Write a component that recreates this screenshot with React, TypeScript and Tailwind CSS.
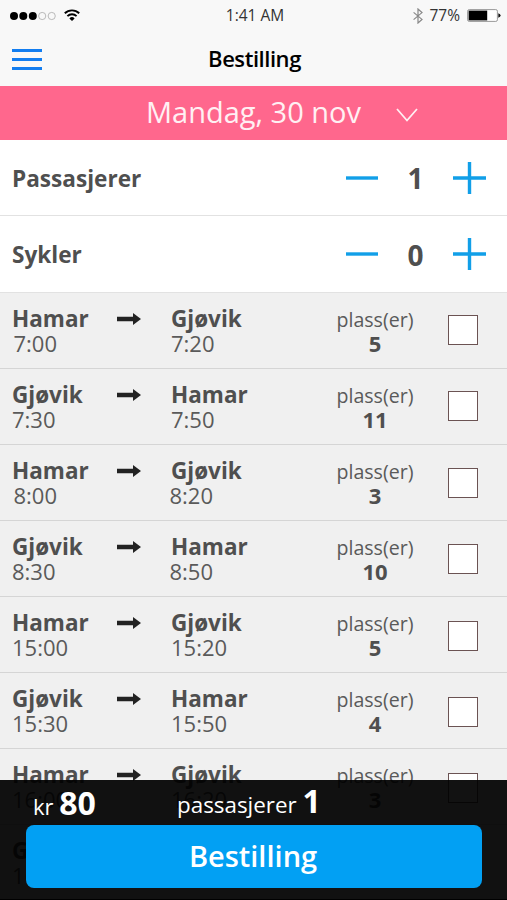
import React, { useState } from 'react';

interface Avgang {
  fra: string;
  til: string;
  avgang: string;
  ankomst: string;
  plasser: number;
}

const AVGANGER: Avgang[] = [
  { fra: 'Hamar', til: 'Gjøvik', avgang: '7:00', ankomst: '7:20', plasser: 5 },
  { fra: 'Gjøvik', til: 'Hamar', avgang: '7:30', ankomst: '7:50', plasser: 11 },
  { fra: 'Hamar', til: 'Gjøvik', avgang: '8:00', ankomst: '8:20', plasser: 3 },
  { fra: 'Gjøvik', til: 'Hamar', avgang: '8:30', ankomst: '8:50', plasser: 10 },
  { fra: 'Hamar', til: 'Gjøvik', avgang: '15:00', ankomst: '15:20', plasser: 5 },
  { fra: 'Gjøvik', til: 'Hamar', avgang: '15:30', ankomst: '15:50', plasser: 4 },
  { fra: 'Hamar', til: 'Gjøvik', avgang: '16:00', ankomst: '16:20', plasser: 3 },
  { fra: 'Gjøvik', til: 'Hamar', avgang: '16:30', ankomst: '16:50', plasser: 6 },
];

function StatusBar() {
  return (
    <div className="grid h-[31px] grid-cols-3 items-center pl-[10px] pr-[6px] text-[15.5px] text-[#333]">
      <div className="flex items-center">
        <svg width="47" height="10" viewBox="0 0 47 10">
          <circle cx="4" cy="5" r="4" fill="#000" />
          <circle cx="13.3" cy="5" r="4" fill="#000" />
          <circle cx="22.8" cy="5" r="4" fill="#000" />
          <circle cx="32.2" cy="5" r="3.6" fill="none" stroke="#aaa" strokeWidth="0.8" />
          <circle cx="41.7" cy="5" r="3.6" fill="none" stroke="#aaa" strokeWidth="0.8" />
        </svg>
        <svg className="mb-0.5 ml-[7px]" width="16" height="12" viewBox="0 0 16 12" fill="none" stroke="#000" strokeWidth="1.9">
          <path d="M0.8 4.3A10.3 10.3 0 0 1 15.2 4.3" />
          <path d="M3.4 7.1A6.6 6.6 0 0 1 12.6 7.1" />
          <path d="M8 12L5.4 9.4A3.7 3.7 0 0 1 10.6 9.4Z" fill="#000" stroke="none" />
        </svg>
      </div>
      <span className="pr-px pt-px text-center">1:41 AM</span>
      <div className="flex items-center justify-end">
        <svg width="10" height="16" viewBox="0 0 10 16" fill="none" stroke="#888" strokeWidth="1.2">
          <path d="M0.6 4.4L9 11.4L5 15V1L9 4.6L0.6 11.6" />
        </svg>
        <span className="ml-[6px] pt-px">77%</span>
        <svg className="ml-[7px]" width="34" height="13" viewBox="0 0 34 13">
          <rect x="0.6" y="0.6" width="29.8" height="11.8" rx="1.6" fill="#fff" stroke="#999" />
          <rect x="1.6" y="1.6" width="18.6" height="9.8" fill="#000" />
          <path d="M31.3 4.2Q33.6 5 33.6 6.5Q33.6 8 31.3 8.8Z" fill="#111" />
        </svg>
      </div>
    </div>
  );
}

function NavBar() {
  return (
    <div className="grid h-[55px] grid-cols-3 items-center pl-3 pr-3">
      <button className="mt-0.5 flex w-[30px] flex-col gap-[6px]" aria-label="Meny">
        <span className="h-[3px] bg-[#127df0]" />
        <span className="h-[3px] bg-[#127df0]" />
        <span className="h-[3px] bg-[#127df0]" />
      </button>
      <h1 className="pl-0.5 text-center text-[22px] font-semibold tracking-[-0.45px] text-black">Bestilling</h1>
    </div>
  );
}

interface TellerProps {
  navn: string;
  verdi: number;
  onEndre: (verdi: number) => void;
}

function Teller({ navn, verdi, onEndre }: TellerProps) {
  return (
    <div className="flex items-center border-b border-[#e2e2e2] pl-3 pr-[21px]">
      <span className="grow pt-0.5 text-[22.6px] font-bold">{navn}</span>
      <button onClick={() => onEndre(Math.max(0, verdi - 1))} aria-label="Færre">
        <svg width="32" height="32" viewBox="0 0 32 32" stroke="#119fe8" strokeWidth="3.4">
          <path d="M0 16H32" />
        </svg>
      </button>
      <span className="w-[75px] pt-px text-center text-[28px] font-bold">{verdi}</span>
      <button onClick={() => onEndre(verdi + 1)} aria-label="Flere">
        <svg width="33" height="32" viewBox="0 0 33 32" stroke="#119fe8" strokeWidth="3.4">
          <path d="M0 16H33M16.5 0V32" />
        </svg>
      </button>
    </div>
  );
}

function Rad({ tur, indeks }: { tur: Avgang; indeks: number }) {
  const [valgt, setValgt] = useState(false);
  const heltime = tur.avgang === '7:00' || tur.avgang === '8:00';
  return (
    <div className="flex h-[76px] shrink-0 border-b border-[#d5d5d5] pl-3 pt-3 leading-[25.5px]">
      <div className="w-[105px] text-[22.5px]">
        <div className="pt-px font-bold leading-[24.5px]">
          <div className="pt-px">{tur.fra}</div>
        </div>
        <div className={`-mt-px text-[22px] text-[#5a5a5a] ${heltime ? 'pl-[1.5px]' : ''}`}>{tur.avgang}</div>
      </div>
      <svg className="mt-2" width="24" height="12" viewBox="0 0 24 12" fill="#222">
        <path d="M0 3.8H16V0L24 6L16 12V8.2H0Z" />
      </svg>
      <div className="ml-[30px] w-[144px] text-[22.5px]">
        <div className="pt-px font-bold leading-[24.5px]">
          <div className="pt-px">{tur.til}</div>
        </div>
        <div className={`-mt-px text-[22px] text-[#5a5a5a] ${tur.ankomst.startsWith('8') ? '-ml-[1.5px]' : ''}`}>{tur.ankomst}</div>
      </div>
      <div className="w-[120px] text-center">
        <div className="pt-1 text-[19.6px] leading-[21.5px] text-[#5a5a5a]">plass(er)</div>
        <div className="text-[22px] font-bold">{tur.plasser}</div>
      </div>
      <button
        onClick={() => setValgt(!valgt)}
        style={{ marginTop: 10 + indeks * 0.4 }}
        className="ml-[13px] h-[30px] w-[30px] border border-[#6b5353] bg-white"
        aria-pressed={valgt}
        aria-label="Velg avgang"
      />
    </div>
  );
}

export default function App() {
  const [passasjerer, setPassasjerer] = useState(1);
  const [sykler, setSykler] = useState(0);

  return (
    <div className="relative flex h-[900px] w-[507px] flex-col overflow-hidden bg-white font-['Open_Sans',sans-serif] text-[#4f4f4f]">
      <header className="h-[86px] shrink-0 bg-[#f8f8f8]">
        <StatusBar />
        <NavBar />
      </header>

      <button className="flex h-[54px] shrink-0 items-center bg-[#ff678d] pb-0.5 pl-[146px] text-[29px] text-[#fff0f3]">
        <span>Mandag, 30 nov</span>
        <svg className="ml-[35px] mt-1.5" width="22" height="14" viewBox="0 0 22 14" fill="none" stroke="#fff0f3" strokeWidth="1.8">
          <path d="M1 1L11 12.5L21 1" />
        </svg>
      </button>

      <div className="grid h-[153px] shrink-0 grid-rows-[76px_77px]">
        <Teller navn="Passasjerer" verdi={passasjerer} onEndre={setPassasjerer} />
        <Teller navn="Sykler" verdi={sykler} onEndre={setSykler} />
      </div>

      <main className="flex grow flex-col overflow-hidden bg-[#f0f0f0]">
        {AVGANGER.map((tur, i) => (
          <Rad key={tur.avgang} tur={tur} indeks={i} />
        ))}
      </main>

      <footer className="absolute inset-x-0 bottom-0 h-[120px] border-b border-black bg-black/93 px-[26px] text-white">
        <div className="flex h-[45px]">
          <div className="-mt-px w-[151px] pl-[7px] text-[22px]">
            kr <b className="text-[32px]">80</b>
          </div>
          <div className="-mt-[3px] text-[22.4px]">
            passasjerer <b className="text-[32px]">{passasjerer}</b>
          </div>
        </div>
        <button className="h-[63px] w-[456px] rounded-lg bg-[#02a0f3] pb-0.5 pr-0.5 text-[29px] font-semibold">Bestilling</button>
      </footer>
    </div>
  );
}
